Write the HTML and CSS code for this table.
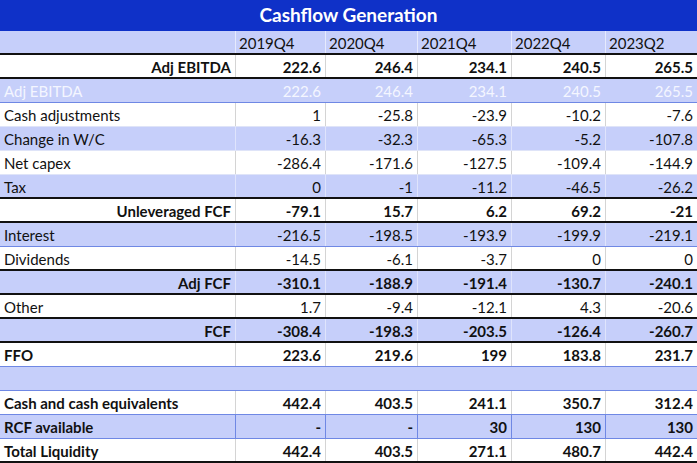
FILE: index.html
```html
<!DOCTYPE html>
<html>
<head>
<meta charset="utf-8">
<link rel="stylesheet" href="styles.css">
</head>
<body>
<div class="sheet">
  <div class="title">Cashflow Generation</div>
  <div class="row hdr b-black"><div class="c lab"></div><div class="c">2019Q4</div><div class="c">2020Q4</div><div class="c">2021Q4</div><div class="c">2022Q4</div><div class="c">2023Q2</div></div>
  <div class="row white bold rlab b-black"><div class="c lab">Adj EBITDA</div><div class="c">222.6</div><div class="c">246.4</div><div class="c">234.1</div><div class="c">240.5</div><div class="c">265.5</div></div>
  <div class="row light ghost b-blue"><div class="c lab">Adj EBITDA</div><div class="c">222.6</div><div class="c">246.4</div><div class="c">234.1</div><div class="c">240.5</div><div class="c">265.5</div></div>
  <div class="row white b-faint"><div class="c lab">Cash adjustments</div><div class="c">1</div><div class="c">-25.8</div><div class="c">-23.9</div><div class="c">-10.2</div><div class="c">-7.6</div></div>
  <div class="row light b-faint"><div class="c lab">Change in W/C</div><div class="c">-16.3</div><div class="c">-32.3</div><div class="c">-65.3</div><div class="c">-5.2</div><div class="c">-107.8</div></div>
  <div class="row white b-faint"><div class="c lab">Net capex</div><div class="c">-286.4</div><div class="c">-171.6</div><div class="c">-127.5</div><div class="c">-109.4</div><div class="c">-144.9</div></div>
  <div class="row light b-black"><div class="c lab">Tax</div><div class="c">0</div><div class="c">-1</div><div class="c">-11.2</div><div class="c">-46.5</div><div class="c">-26.2</div></div>
  <div class="row white bold rlab b-black"><div class="c lab">Unleveraged FCF</div><div class="c">-79.1</div><div class="c">15.7</div><div class="c">6.2</div><div class="c">69.2</div><div class="c">-21</div></div>
  <div class="row light b-blue"><div class="c lab">Interest</div><div class="c">-216.5</div><div class="c">-198.5</div><div class="c">-193.9</div><div class="c">-199.9</div><div class="c">-219.1</div></div>
  <div class="row white b-black"><div class="c lab">Dividends</div><div class="c">-14.5</div><div class="c">-6.1</div><div class="c">-3.7</div><div class="c">0</div><div class="c">0</div></div>
  <div class="row light bold rlab b-black"><div class="c lab">Adj FCF</div><div class="c">-310.1</div><div class="c">-188.9</div><div class="c">-191.4</div><div class="c">-130.7</div><div class="c">-240.1</div></div>
  <div class="row white b-black"><div class="c lab">Other</div><div class="c">1.7</div><div class="c">-9.4</div><div class="c">-12.1</div><div class="c">4.3</div><div class="c">-20.6</div></div>
  <div class="row light bold rlab b-black"><div class="c lab">FCF</div><div class="c">-308.4</div><div class="c">-198.3</div><div class="c">-203.5</div><div class="c">-126.4</div><div class="c">-260.7</div></div>
  <div class="row white bold b-blue"><div class="c lab">FFO</div><div class="c">223.6</div><div class="c">219.6</div><div class="c">199</div><div class="c">183.8</div><div class="c">231.7</div></div>
  <div class="row light blank b-blue"><div class="c lab"></div><div class="c"></div><div class="c"></div><div class="c"></div><div class="c"></div><div class="c"></div></div>
  <div class="row white bold b-blue"><div class="c lab">Cash and cash equivalents</div><div class="c">442.4</div><div class="c">403.5</div><div class="c">241.1</div><div class="c">350.7</div><div class="c">312.4</div></div>
  <div class="row light bold bluegrid b-blue"><div class="c lab">RCF available</div><div class="c">-</div><div class="c">-</div><div class="c">30</div><div class="c">130</div><div class="c">130</div></div>
  <div class="row white bold b-black"><div class="c lab">Total Liquidity</div><div class="c">442.4</div><div class="c">403.5</div><div class="c">271.1</div><div class="c">480.7</div><div class="c">442.4</div></div>
</div>
</body>
</html>
```

FILE: styles.css
```css
html, body {
  margin: 0;
  padding: 0;
  background: #ffffff;
}
body {
  font-family: Lato, "Open Sans", sans-serif;
  font-size: 15px;
  color: #111111;
}
.sheet {
  width: 697px;
}
.title {
  height: 31px;
  background: #0f31c8;
  color: #ffffff;
  font-weight: bold;
  font-size: 19px;
  display: flex;
  align-items: center;
  justify-content: center;
  box-sizing: border-box;
  padding-bottom: 2px;
}
.row {
  display: grid;
  grid-template-columns: 235px 90px 92px 94px 94px 92px;
  height: 24px;
  box-sizing: border-box;
  border-bottom: 1px solid transparent;
}
.c {
  display: flex;
  align-items: center;
  justify-content: flex-end;
  padding: 1px 4px 0 4px;
  border-left: 1px solid #d4d4d4;
  white-space: nowrap;
  overflow: hidden;
}
.c.lab {
  justify-content: flex-start;
  border-left: none;
  padding-left: 4px;
}
.rlab .c.lab {
  justify-content: flex-end;
  padding-right: 4px;
}
.white { background: #ffffff; }
.light { background: #c6cffa; }
.light .c { border-left-color: #dfe4fc; }
.bold { font-weight: bold; }
.hdr {
  background: #c6cffa;
}
.hdr .c {
  justify-content: flex-start;
  border-left-color: #e6eafd;
  padding-left: 3px;
}
.ghost { color: #f4f6ff; }
.ghost .c { border-left-color: transparent; }
.blank .c { border-left-color: transparent; }
.bluegrid .c { border-left-color: #6f88e4; }
.b-black { border-bottom: 2px solid #111111; }
.b-blue { border-bottom: 1px solid #6f88e4; }
.b-faint { border-bottom: 1px solid #dfe4f8; }
```
